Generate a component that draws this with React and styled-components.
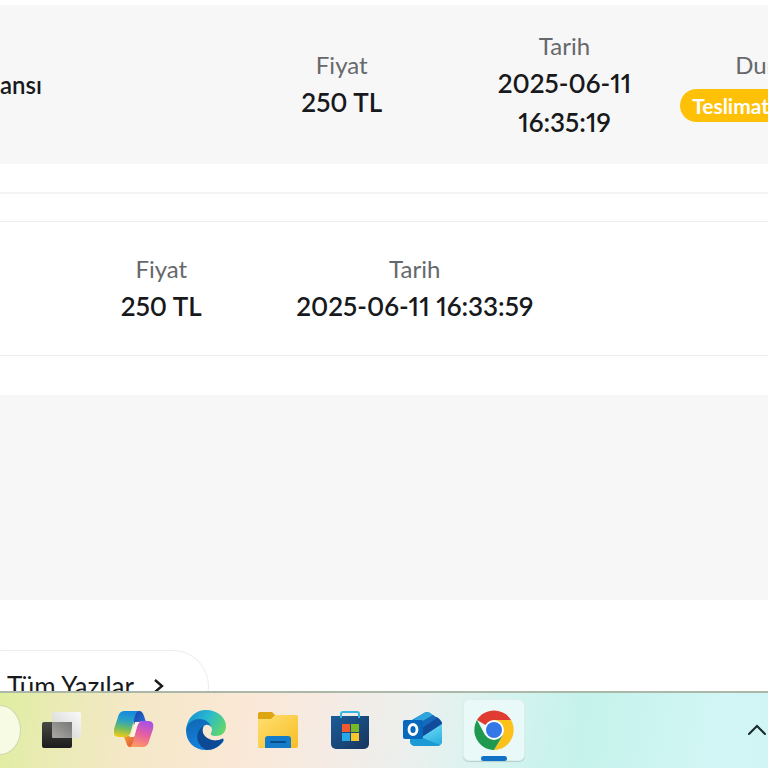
import styled, {createGlobalStyle} from "styled-components";

const GlobalStyle = createGlobalStyle`
    * {
        box-sizing: border-box;
    }

    body {
        margin: 0;
        background: #ffffff;
        color: #17191c;
        font-family: Lato, "Liberation Sans", sans-serif;
        font-variant-numeric: proportional-nums;
    }

    p {
        margin: 0;
    }
`

const Wrapper = styled.div`
    height: 100vh;
    display: flex;
    flex-direction: column;
    overflow: hidden;
`

const Content = styled.main`
    flex: 1;
    min-height: 0;
    overflow: hidden;
`

const OrderPanel = styled.section`
    padding: 5px 0 28px;
    border-bottom: 2px solid #f4f4f4;
    margin-bottom: 27px;
`

const OrderRow = styled.div`
    display: grid;
    grid-template-columns: ${(props) => props.$columns};
    align-items: center;
    min-height: ${(props) => (props.$filled ? 159 : 135)}px;
    background: ${(props) => (props.$filled ? "#f7f7f7" : "#ffffff")};
    border: solid #ececec;
    border-width: ${(props) => (props.$filled ? 0 : "1px 0")};
`

const Cell = styled.div`
    display: flex;
    flex-direction: column;
    align-items: center;
    text-align: center;
    white-space: nowrap;
`

const ProductName = styled.p`
    font-size: 24px;
    line-height: 36px;
    font-weight: 600;
`

const Label = styled.p`
    font-size: 24px;
    line-height: 36px;
    color: #66686b;
`

const Value = styled.p`
    max-width: ${(props) => (props.$narrow ? "150px" : "none")};
    font-size: 26px;
    line-height: 39px;
    font-weight: 600;
    white-space: ${(props) => (props.$narrow ? "normal" : "nowrap")};
`

const Badge = styled.span`
    margin-top: 6px;
    padding: 0 12px;
    border-radius: 17px;
    background: #ffc107;
    color: #ffffff;
    font-size: 21px;
    line-height: 33px;
    font-weight: 700;
`

const Banner = styled.div`
    height: 205px;
    margin-top: 39px;
    background: #f7f7f7;
`

const PostsSection = styled.section`
    padding-top: 50px;
`

const AllPostsLink = styled.a`
    display: inline-flex;
    align-items: center;
    gap: 20px;
    height: 72px;
    margin-left: -32px;
    padding: 0 44px 0 38px;
    border: 1px solid #ececec;
    border-radius: 36px;
    color: #17191c;
    font-size: 26px;
    text-decoration: none;
    white-space: nowrap;
`

const Taskbar = styled.nav`
    display: flex;
    align-items: center;
    gap: 10px;
    height: 77px;
    padding-bottom: 2px;
    flex-shrink: 0;
    border-top: 2px solid #aab7a9;
    background: linear-gradient(100deg, #dfee9f 0%, #e9ebb3 7%, #f4e8c6 17%, #fae8d6 32%, #f5ebe4 43%, #ebf0ee 54%, #d5f4ef 65%, #c5f2eb 75%, #d1f6f5 92%, #d0f5f4 100%);
`

const SearchEdge = styled.button`
    width: 21px;
    height: 50px;
    padding: 0;
    border: 1px solid #cfd5ae;
    border-left: 0;
    border-radius: 0 21px 21px 0 / 0 25px 25px 0;
    background: #f8fbe4;
`

const AppButton = styled.button`
    position: relative;
    display: flex;
    align-items: center;
    justify-content: center;
    width: 62px;
    height: 62px;
    padding: 0;
    border: 1px solid ${(props) => (props.$active ? "#dcefee" : "transparent")};
    border-radius: 6px;
    background: ${(props) => (props.$active ? "#e9f9f8" : "transparent")};
    box-shadow: ${(props) => (props.$active ? "0 1px 1px #b4cfcd" : "none")};
`

const ActiveMark = styled.span`
    position: absolute;
    bottom: -1px;
    left: 17px;
    width: 26px;
    height: 5px;
    border-radius: 3px;
    background: #0f72c6;
`

const TrayButton = styled.button`
    margin-left: auto;
    padding: 0 2px 0 0;
    border: 0;
    background: transparent;
    line-height: 0;
`

function TaskViewIcon() {
  return (
      <svg width="40" height="40" viewBox="0 0 40 40">
        <defs>
          <linearGradient id="tvDark" x1="0" y1="0" x2="0" y2="1">
            <stop offset="0" stopColor="#484846"/>
            <stop offset="1" stopColor="#1c1c1c"/>
          </linearGradient>
          <linearGradient id="tvLight" x1="0" y1="1" x2="1" y2="0">
            <stop offset="0" stopColor="#cfcfcd"/>
            <stop offset="1" stopColor="#fafafa"/>
          </linearGradient>
          <linearGradient id="tvMix" x1="0" y1="1" x2="1" y2="0">
            <stop offset="0" stopColor="#aaa9a5"/>
            <stop offset="1" stopColor="#777775"/>
          </linearGradient>
        </defs>
        <rect x="0" y="12" width="30" height="26" rx="2" fill="url(#tvDark)"/>
        <rect x="10" y="2" width="29" height="26" rx="2" fill="url(#tvLight)"/>
        <path d="M10 12h20v16H12a2 2 0 0 1-2-2z" fill="url(#tvMix)"/>
      </svg>
  );
}

function CopilotIcon() {
  return (
      <svg width="40" height="40" viewBox="0 0 40 40">
        <defs>
          <linearGradient id="cpLeft" x1="0.45" y1="0" x2="0.3" y2="1">
            <stop offset="0" stopColor="#1689df"/>
            <stop offset="0.35" stopColor="#2aa2c4"/>
            <stop offset="0.65" stopColor="#6abb67"/>
            <stop offset="1" stopColor="#f3cb16"/>
          </linearGradient>
          <linearGradient id="cpRight" x1="0.7" y1="0" x2="0.35" y2="1">
            <stop offset="0" stopColor="#a650e8"/>
            <stop offset="0.5" stopColor="#e6609f"/>
            <stop offset="1" stopColor="#ff9a62"/>
          </linearGradient>
          <linearGradient id="cpTop" x1="0" y1="0" x2="1" y2="1">
            <stop offset="0" stopColor="#183e9e"/>
            <stop offset="1" stopColor="#2876df"/>
          </linearGradient>
          <linearGradient id="cpBottom" x1="0" y1="0" x2="1" y2="1">
            <stop offset="0" stopColor="#f3a22f"/>
            <stop offset="1" stopColor="#df493e"/>
          </linearGradient>
        </defs>
        <path d="M18 1h7c3 0 4 2 5 5l2 6h-6c-3 0-5 1-6 4z" fill="url(#cpTop)"/>
        <path d="M9 26h13l-3 9c-1 3-4 3-6 0-1-3-2-7-4-9z" fill="url(#cpBottom)"/>
        <path d="M11 1h14c-2 0-3 2-4 5l-4 15c-1 4-3 6-7 6H5c-5 0-6-3-5-8L4 7c1-4 3-6 7-6z" fill="url(#cpLeft)"/>
        <path d="M27 11h7c5 0 6 3 5 8l-4 12c-1 4-3 6-7 6H14c3 0 4-2 5-5l4-16c1-3 2-5 4-5z" fill="url(#cpRight)"/>
        <path d="M21 12h5c-2 1-2 3-3 5l-3 10h-5c2-1 2-3 3-5z" fill="#fff3e2"/>
      </svg>
  );
}

function EdgeIcon() {
  return (
      <svg width="40" height="40" viewBox="0 0 40 40">
        <defs>
          <linearGradient id="edTop" x1="0" y1="0.2" x2="1" y2="0.6">
            <stop offset="0" stopColor="#168fd5"/>
            <stop offset="0.5" stopColor="#29b9ce"/>
            <stop offset="1" stopColor="#60d66c"/>
          </linearGradient>
          <linearGradient id="edMid" x1="0" y1="0" x2="0.3" y2="1">
            <stop offset="0" stopColor="#0f68b5"/>
            <stop offset="1" stopColor="#1482dc"/>
          </linearGradient>
        </defs>
        <path d="M0 20C1 7 10 0 20 0c12 0 20 8 20 16 0 7-5 10-10 10-4 0-6-1-5-3 2-3 1-6-2-8-7-5-18-3-23 5z" fill="url(#edTop)"/>
        <path d="M0 20C1 13 7 9 13 9c6 0 11 3 12 8-2-3-7-3-8 1-2 5 2 12 11 13 3 0 6-1 8-2 2 0 2 1 1 3-4 5-10 8-17 8C8 40 0 32 0 20z" fill="url(#edMid)"/>
        <path d="M21 40C10 36 8 23 17 16c-2 6 1 12 9 14 4 1 7 0 10-1 1-1 2 0 1 2-4 6-10 9-16 9z" fill="#0c4a96"/>
      </svg>
  );
}

function FolderIcon() {
  return (
      <svg width="40" height="40" viewBox="0 0 40 40">
        <defs>
          <linearGradient id="fdBody" x1="0" y1="0" x2="1" y2="1">
            <stop offset="0" stopColor="#ffe071"/>
            <stop offset="1" stopColor="#f7bd27"/>
          </linearGradient>
        </defs>
        <path d="M2 2h12l4 4h20a2 2 0 0 1 2 2v10H0V4a2 2 0 0 1 2-2z" fill="#dda510"/>
        <path d="M0 9h13l4-4h21a2 2 0 0 1 2 2v29a2 2 0 0 1-2 2H2a2 2 0 0 1-2-2z" fill="url(#fdBody)"/>
        <path d="M7 38V29a3 3 0 0 1 3-3h20a3 3 0 0 1 3 3v9z" fill="#147cc8"/>
        <rect x="12" y="31" width="16" height="2" rx="1" fill="#074d89"/>
      </svg>
  );
}

function StoreIcon() {
  return (
      <svg width="40" height="40" viewBox="0 0 40 40">
        <defs>
          <linearGradient id="stBag" x1="0" y1="0" x2="1" y2="1">
            <stop offset="0" stopColor="#1c5c99"/>
            <stop offset="1" stopColor="#17365f"/>
          </linearGradient>
        </defs>
        <path d="M1 6h38v28a5 5 0 0 1-5 5H6a5 5 0 0 1-5-5z" fill="url(#stBag)"/>
        <path d="M11 8V4a2 2 0 0 1 2-2h14a2 2 0 0 1 2 2v4" fill="none" stroke="#37b4e1" strokeWidth="2"/>
        <rect x="12" y="14" width="8" height="8" fill="#f15a30"/>
        <rect x="21" y="14" width="8" height="8" fill="#79b928"/>
        <rect x="12" y="23" width="8" height="8" fill="#25a7e8"/>
        <rect x="21" y="23" width="8" height="8" fill="#fbc52c"/>
      </svg>
  );
}

function OutlookIcon() {
  return (
      <svg width="40" height="40" viewBox="0 0 40 40">
        <defs>
          <linearGradient id="olFront" x1="0.2" y1="0" x2="0.8" y2="1">
            <stop offset="0" stopColor="#7fe3f8"/>
            <stop offset="1" stopColor="#27aee0"/>
          </linearGradient>
        </defs>
        <path d="M8 11 22 3q3-2 6 0l12 9v19a5 5 0 0 1-5 5H13a5 5 0 0 1-5-5z" fill="#1583cf"/>
        <path d="M10 11 22 3q3-2 6 0l7 5-18 11z" fill="#2ea6dd"/>
        <path d="m19 17 15-10q2 0 5 4l1 3-18 12-4-2z" fill="#114c9c"/>
        <path d="m17 13 14-8 4 3-15 10z" fill="#1769bb"/>
        <path d="M20 27 40 14v17a5 5 0 0 1-5 5H13a5 5 0 0 1-5-5z" fill="url(#olFront)"/>
        <path d="M8 28h13l17 7q-1 1-3 1H13a5 5 0 0 1-5-5z" fill="#1b9ad6"/>
        <rect x="1" y="10" width="20" height="19" rx="2" fill="#0868bc"/>
        <ellipse cx="11" cy="19.5" rx="4" ry="5" fill="none" stroke="#ffffff" strokeWidth="2.8"/>
      </svg>
  );
}

function ChromeIcon() {
  return (
      <svg width="40" height="40" viewBox="0 0 40 40">
        <path d="M20 20 3 10a20 20 0 0 1 34 0z" fill="#df3b30"/>
        <path d="M20 10h17a20 20 0 0 1-17 30l9-15z" fill="#fcc21b"/>
        <path d="M3 10a20 20 0 0 0 17 30l9-15-9 4-9-4z" fill="#1f9850"/>
        <circle cx="20" cy="20" r="10" fill="#ffffff"/>
        <circle cx="20" cy="20" r="8" fill="#3478e8"/>
      </svg>
  );
}

const apps = [
  {name: "Görev Görünümü", Icon: TaskViewIcon},
  {name: "Copilot", Icon: CopilotIcon},
  {name: "Microsoft Edge", Icon: EdgeIcon},
  {name: "Dosya Gezgini", Icon: FolderIcon},
  {name: "Microsoft Store", Icon: StoreIcon},
  {name: "Outlook", Icon: OutlookIcon},
  {name: "Google Chrome", Icon: ChromeIcon, active: true},
];

function Field({label, value, narrow}) {
  return (
      <Cell>
        <Label>{label}</Label>
        <Value $narrow={narrow}>{value}</Value>
      </Cell>
  );
}

export default function App() {
  return (
      <Wrapper>
        <GlobalStyle/>
        <Content>
          <OrderPanel>
            <OrderRow $filled $columns="30% 29% 29% 25%">
              <ProductName>ansı</ProductName>
              <Field label="Fiyat" value="250 TL"/>
              <Field label="Tarih" value="2025-06-11 16:35:19" narrow/>
              <Cell>
                <Label>Durum</Label>
                <Badge>Teslimat Bekliyor</Badge>
              </Cell>
            </OrderRow>
          </OrderPanel>

          {/* first column is the empty end of the product name */}
          <OrderRow $columns="10% 22% 44% 24%">
            <span/>
            <Field label="Fiyat" value="250 TL"/>
            <Field label="Tarih" value="2025-06-11 16:33:59"/>
          </OrderRow>

          <Banner/>

          <PostsSection>
            <AllPostsLink href="#">
              Tüm Yazılar
              <svg width="10" height="16" viewBox="0 0 10 16" fill="none" stroke="#17191c" strokeWidth="2.4">
                <path d="m1 2 7 6-7 6"/>
              </svg>
            </AllPostsLink>
          </PostsSection>
        </Content>

        <Taskbar>
          <SearchEdge aria-label="Ara"/>
          {apps.map(({name, Icon, active}) => (
              <AppButton key={name} aria-label={name} $active={active}>
                <Icon/>
                {active && <ActiveMark/>}
              </AppButton>
          ))}
          <TrayButton aria-label="Gizli simgeleri göster">
            <svg width="18" height="12" viewBox="0 0 18 12" fill="none" stroke="#17282b" strokeWidth="2" strokeLinecap="round">
              <path d="m1 10 8-8 8 8"/>
            </svg>
          </TrayButton>
        </Taskbar>
      </Wrapper>
  );
}
